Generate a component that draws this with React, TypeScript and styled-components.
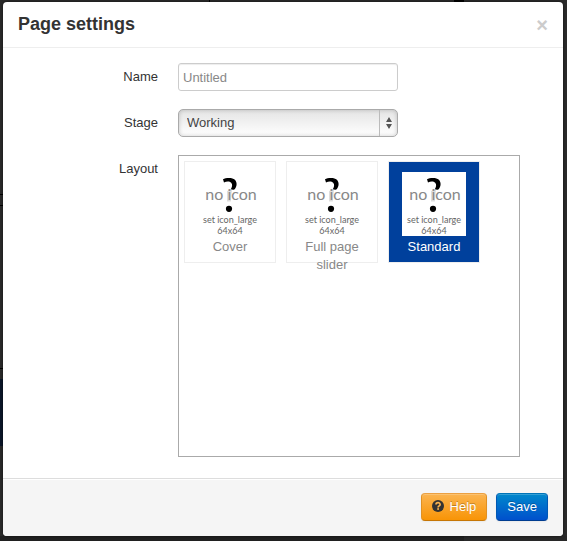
import React, { useState } from "react";
import styled, { createGlobalStyle } from "styled-components";

const GlobalStyle = createGlobalStyle`
  *, *::before, *::after { box-sizing: border-box; }
  html, body { min-height: 100%; }
  body {
    margin: 0;
    overflow-x: hidden;
    background: #2a2a2a;
    color: #333;
    font: 13px/18px "Liberation Sans", Arial, sans-serif;
  }
  button, input, select { font: inherit; }
`;

/* The dimmed page that shows round the edges of the dialog. */
const Backdrop = styled.div`
  min-height: 100vh;
  padding: 2px 4px 5px 3px;
  background:
    linear-gradient(#000, #000) 0 194px / 3px 1px no-repeat,
    linear-gradient(#000, #000) 0 205px / 3px 1px no-repeat,
    linear-gradient(#000, #000) 0 368px / 3px 1px no-repeat,
    linear-gradient(#0b1629, #0b1629) 0 379px / 3px 67px no-repeat,
    linear-gradient(#000, #000) 209px 0 / 1px 2px no-repeat,
    linear-gradient(#000, #000) 454px 0 / 10px 2px no-repeat,
    linear-gradient(90deg, #202020 464px, #282828 464px) 0 100% / 100% 5px no-repeat,
    #2a2a2a;
`;

const Dialog = styled.form`
  background: #fff;
  border-radius: 4px;
  box-shadow: 0 0 3px rgba(0, 0, 0, 0.6);
  overflow: hidden;
`;

const Header = styled.header`
  display: flex;
  align-items: center;
  justify-content: space-between;
  height: 46px;
  padding: 0 15px;
  border-bottom: 1px solid #eee;
`;

const Title = styled.h1`
  margin: 0;
  font-size: 18px;
  line-height: 27px;
  font-weight: bold;
`;

const CloseButton = styled.button`
  display: flex;
  padding: 0;
  border: 0;
  background: none;
  color: #ccc;
  font-size: 20px;
  line-height: 18px;
  font-weight: bold;
  cursor: pointer;
`;

const Body = styled.div`
  display: grid;
  gap: 18px;
  padding: 15px 43px 21px 15px;
`;

const Field = styled.div`
  display: grid;
  grid-template-columns: 140px minmax(0, 1fr);
  column-gap: 20px;
`;

const FieldLabel = styled.label`
  padding-top: 5px;
  text-align: right;
`;

const TextInput = styled.input`
  width: 220px;
  max-width: 100%;
  height: 28px;
  padding: 4px;
  border: 1px solid #ccc;
  border-radius: 3px;
  color: #555;
  background: #fff;
  box-shadow: inset 0 1px 1px rgba(0, 0, 0, 0.075);
  &::placeholder { color: #888; opacity: 1; }
`;

const SelectBox = styled.div`
  display: grid;
  grid-template-columns: minmax(0, 1fr) 18px;
  width: 220px;
  max-width: 100%;
  height: 28px;
  border: 1px solid #aaa;
  border-radius: 5px;
  background: linear-gradient(#e4e4e4, #fff);
  box-shadow: inset 0 0 4px rgba(0, 0, 0, 0.2);
`;

const Select = styled.select`
  grid-area: 1 / 1 / 2 / 3;
  appearance: none;
  padding: 0 26px 0 8px;
  border: 0;
  background: none;
  color: #444;
`;

const SelectArrows = styled.span`
  grid-area: 1 / 2;
  display: flex;
  align-items: center;
  justify-content: center;
  border-left: 1px solid #bbb;
  pointer-events: none;
`;

const LayoutList = styled.div`
  display: flex;
  flex-wrap: wrap;
  align-content: flex-start;
  gap: 10px;
  min-height: 302px;
  padding: 5px;
  border: 1px solid #aaa;
`;

const LayoutCard = styled.label<{ $selected: boolean }>`
  display: flex;
  flex-direction: column;
  align-items: center;
  gap: 2px;
  width: 92px;
  height: 102px;
  padding: 10px 13px;
  border: 1px solid #eee;
  text-align: center;
  cursor: pointer;
  color: ${(p) => (p.$selected ? "#fff" : "#888")};
  background: ${(p) => (p.$selected ? "#00409c" : "#fff")};
`;

const HiddenRadio = styled.input`
  position: absolute;
  width: 1px;
  height: 1px;
  margin: 0;
  opacity: 0;
`;

const Picture = styled.svg`
  flex: none;
  width: 64px;
  height: 64px;
  background: #fff;
  font-family: Lato, "Open Sans", sans-serif;
`;

const Footer = styled.footer`
  display: flex;
  justify-content: flex-end;
  gap: 9px;
  padding: 14px 15px 15px;
  background: #f5f5f5;
  border-top: 1px solid #ddd;
  box-shadow: inset 0 1px 0 #fff;
`;

const Button = styled.button<{ $tone: "warning" | "primary" }>`
  display: flex;
  align-items: center;
  gap: 4px;
  height: 28px;
  padding: 0 10px;
  border: 1px solid;
  border-color: ${(p) =>
    p.$tone === "warning" ? "#eba042 #e09123 #c67605" : "#0074b8 #0058b4 #003c90"};
  border-radius: 4px;
  color: #fff;
  text-shadow: 0 -1px 0 rgba(0, 0, 0, 0.25);
  background: ${(p) =>
    p.$tone === "warning"
      ? "linear-gradient(#fbb450, #f89406)"
      : "linear-gradient(#0088cc, #0050cc)"};
  box-shadow: inset 0 1px 0 rgba(255, 255, 255, 0.2), 0 1px 2px rgba(0, 0, 0, 0.05);
  cursor: pointer;
`;

function NoIconPicture() {
  return (
    <Picture viewBox="0 0 64 64" aria-hidden="true">
      <path
        d="M25 7.2 C28.5 5.4 38.6 4.6 38.6 12 C38.6 14.6 37.6 16.4 36 17.8 L32.6 17.4 C34.2 15.4 34.8 12.6 33.2 10.8 C31.4 9 28.4 9.4 26 10.4 Z"
        fill="#000"
      />
      <path d="M29 19 L34 17.5 L32.8 29.5 L29 29.5 Z" fill="#ddd" />
      <circle cx="31" cy="36.8" r="3.1" fill="#000" />
      <text x="33" y="28" textAnchor="middle" fontSize="16" fill="#888">
        no icon
      </text>
      <text x="32" y="51" textAnchor="middle" fontSize="9" fill="#666">
        set icon_large
      </text>
      <text x="32" y="62" textAnchor="middle" fontSize="9" fill="#666">
        64x64
      </text>
    </Picture>
  );
}

const layouts = ["Cover", "Full page slider", "Standard"];

export default function App() {
  const [layout, setLayout] = useState("Standard");
  return (
    <>
      <GlobalStyle />
      <Backdrop>
        <Dialog
          role="dialog"
          aria-labelledby="dialog-title"
          onSubmit={(e: React.FormEvent) => e.preventDefault()}
        >
          <Header>
            <Title id="dialog-title">Page settings</Title>
            <CloseButton type="button" aria-label="Close">
              ×
            </CloseButton>
          </Header>
          <Body>
            <Field>
              <FieldLabel htmlFor="name">Name</FieldLabel>
              <TextInput id="name" type="text" placeholder="Untitled" />
            </Field>
            <Field>
              <FieldLabel htmlFor="stage">Stage</FieldLabel>
              <SelectBox>
                <Select id="stage" defaultValue="Working">
                  <option>Working</option>
                </Select>
                <SelectArrows>
                  <svg width="6" height="12" viewBox="0 0 6 12" fill="#555" aria-hidden="true">
                    <path d="M3 0 L6 5 H0 Z M0 7 H6 L3 12 Z" />
                  </svg>
                </SelectArrows>
              </SelectBox>
            </Field>
            <Field>
              <FieldLabel as="span" id="layout-label">
                Layout
              </FieldLabel>
              <LayoutList role="radiogroup" aria-labelledby="layout-label">
                {layouts.map((name) => (
                  <LayoutCard key={name} $selected={name === layout}>
                    <HiddenRadio
                      type="radio"
                      name="layout"
                      value={name}
                      checked={name === layout}
                      onChange={() => setLayout(name)}
                    />
                    <NoIconPicture />
                    <span>{name}</span>
                  </LayoutCard>
                ))}
              </LayoutList>
            </Field>
          </Body>
          <Footer>
            <Button type="button" $tone="warning">
              <svg width="14" height="14" viewBox="0 0 14 14" aria-hidden="true">
                <circle cx="6" cy="6" r="6" fill="#333" />
                <path
                  d="M4 4.6 C4 2 8.1 2 8.1 4.4 C8.1 6 6.1 5.8 6.1 7.4"
                  fill="none"
                  stroke="#fbb450"
                  strokeWidth="1.7"
                />
                <rect x="5.2" y="8.2" width="1.8" height="1.6" fill="#fbb450" />
              </svg>
              Help
            </Button>
            <Button type="submit" $tone="primary">
              Save
            </Button>
          </Footer>
        </Dialog>
      </Backdrop>
    </>
  );
}
